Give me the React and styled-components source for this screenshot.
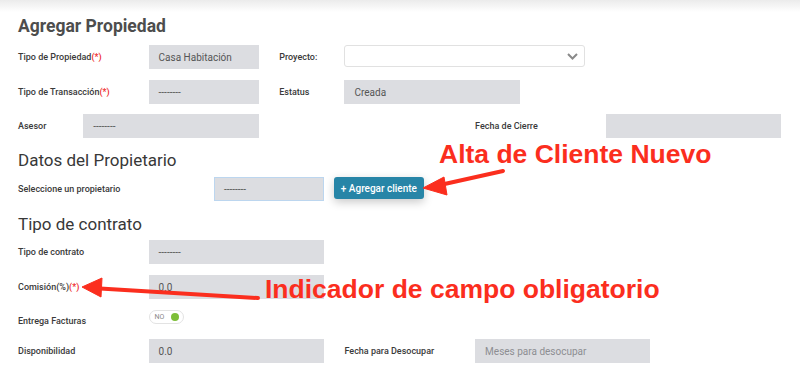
import styled, { createGlobalStyle } from "styled-components";

const GlobalStyle = createGlobalStyle`
  body {
    margin: 0;
    background: #fff;
    font-family: Roboto, "Liberation Sans", sans-serif;
  }
`;

const Page = styled.div`
  position: relative;
  width: 800px;
  height: 375px;
  overflow: hidden;
  background: #fff;
`;

const TopShade = styled.div`
  height: 12px;
  background: linear-gradient(#ebebeb, #fff);
`;

const Content = styled.div`
  padding: 0 19px 0 18px;
  display: flex;
  flex-direction: column;
`;

const PageTitle = styled.h1`
  margin: 3px 0 0;
  font-size: 17.5px;
  line-height: 22px;
  font-weight: 700;
  color: #4d4d4d;
`;

const SectionTitle = styled.h2`
  margin: ${(p) => p.$mt}px 0 0;
  font-size: 17px;
  line-height: 20px;
  font-weight: 400;
  color: #383838;
`;

const Row = styled.div`
  display: grid;
  grid-template-columns: repeat(12, 1fr);
  column-gap: 20.6px;
  align-items: center;
  height: ${(p) => p.$h || 24}px;
  margin-top: ${(p) => p.$mt}px;
`;

const Label = styled.label`
  grid-column: ${(p) => p.$col} / span ${(p) => p.$span || 2};
  font-size: 9px;
  font-weight: 500;
  color: #3a3a3a;
  white-space: nowrap;
`;

const Required = styled.span`
  color: #ee2a2a;
`;

const Field = styled.div`
  grid-column: ${(p) => p.$col} / span ${(p) => p.$span || 2};
  height: 24px;
  box-sizing: border-box;
  padding: 0 9px;
  display: flex;
  align-items: center;
  background: #dcdde1;
  border: 1px solid ${(p) => (p.$focus ? "#bcd6ef" : "#dcdde1")};
  font-size: 10px;
  color: ${(p) => (p.$placeholder ? "#8d8e92" : "#555")};
`;

const Select = styled.div`
  grid-column: ${(p) => p.$col} / span ${(p) => p.$span};
  height: 22px;
  align-self: start;
  box-sizing: border-box;
  border: 1px solid #e1e1e1;
  border-radius: 3px;
  background: #fff;
  display: flex;
  align-items: center;
  justify-content: flex-end;
  padding-right: 6px;
`;

const OwnerGroup = styled.div`
  grid-column: 4 / span 5;
  display: flex;
  align-items: center;
  gap: 10px;
`;

const OwnerField = styled(Field)`
  width: 110px;
  flex: 0 0 110px;
`;

const AddButton = styled.button`
  height: 22px;
  width: 90px;
  margin-top: -2px;
  border: none;
  border-radius: 3px;
  background: #2785a7;
  color: #fff;
  font-family: Roboto, "Liberation Sans", sans-serif;
  font-size: 10px;
  font-weight: 500;
  padding: 0;
  box-shadow: 0 3px 10px rgba(0, 0, 0, 0.22);
`;

const Toggle = styled.div`
  grid-column: 3 / span 1;
  align-self: start;
  width: 35px;
  height: 14px;
  box-sizing: border-box;
  border: 1px solid #e3e3e3;
  border-radius: 8px;
  display: flex;
  align-items: center;
  justify-content: space-between;
  padding: 0 4px 0 5px;
  font-size: 7px;
  color: #888;
`;

const Dot = styled.span`
  width: 8px;
  height: 8px;
  border-radius: 50%;
  background: #7dbe38;
`;

const Note = styled.div`
  position: absolute;
  left: ${(p) => p.$x}px;
  top: ${(p) => p.$y}px;
  font-family: "Liberation Sans", Arial, sans-serif;
  font-weight: 700;
  font-size: 26.5px;
  line-height: 26.5px;
  color: #fb2e1e;
  white-space: nowrap;
`;

const Overlay = styled.svg`
  position: absolute;
  left: 0;
  top: 0;
  pointer-events: none;
`;

const Chevron = () => (
  <svg width="11" height="7" viewBox="0 0 11 7">
    <polyline points="1,1 5.5,5.5 10,1" fill="none" stroke="#8a8a8a" strokeWidth="2" />
  </svg>
);

export default function App() {
  return (
    <Page>
      <GlobalStyle />
      <TopShade />
      <Content>
        <PageTitle>Agregar Propiedad</PageTitle>

        <Row $mt={8}>
          <Label $col={1}>
            Tipo de Propiedad<Required>(*)</Required>
          </Label>
          <Field $col={3}>Casa Habitación</Field>
          <Label $col={5} $span={1}>Proyecto:</Label>
          <Select $col={6} $span={4}>
            <Chevron />
          </Select>
        </Row>

        <Row $mt={11}>
          <Label $col={1}>
            Tipo de Transacción<Required>(*)</Required>
          </Label>
          <Field $col={3}>--------</Field>
          <Label $col={5} $span={1}>Estatus</Label>
          <Field $col={6} $span={3}>Creada</Field>
        </Row>

        <Row $mt={10}>
          <Label $col={1} $span={1}>Asesor</Label>
          <Field $col={2} $span={3}>--------</Field>
          <Label $col={8}>Fecha de Cierre</Label>
          <Field $col={10} $span={3} />
        </Row>

        <SectionTitle $mt={12}>Datos del Propietario</SectionTitle>

        <Row $mt={7}>
          <Label $col={1} $span={3}>Seleccione un propietario</Label>
          <OwnerGroup>
            <OwnerField $focus>--------</OwnerField>
            <AddButton>+ Agregar cliente</AddButton>
          </OwnerGroup>
        </Row>

        <SectionTitle $mt={13}>Tipo de contrato</SectionTitle>

        <Row $mt={6}>
          <Label $col={1}>Tipo de contrato</Label>
          <Field $col={3} $span={3}>--------</Field>
        </Row>

        <Row $mt={11}>
          <Label $col={1}>
            Comisión(%)<Required>(*)</Required>
          </Label>
          <Field $col={3} $span={3}>0.0</Field>
        </Row>

        <Row $mt={11} $h={22}>
          <Label $col={1}>Entrega Facturas</Label>
          <Toggle>
            NO
            <Dot />
          </Toggle>
        </Row>

        <Row $mt={7}>
          <Label $col={1}>Disponibilidad</Label>
          <Field $col={3} $span={3}>0.0</Field>
          <Label $col={6}>Fecha para Desocupar</Label>
          <Field $col={8} $span={3} $placeholder>
            Meses para desocupar
          </Field>
        </Row>
      </Content>

      <Note $x={439} $y={141}>Alta de Cliente Nuevo</Note>
      <Note $x={265} $y={276}>Indicador de campo obligatorio</Note>

      <Overlay width="800" height="375" viewBox="0 0 800 375">
        <g fill="#fb2e1e" stroke="#fb2e1e">
          <line x1="503" y1="171" x2="440" y2="185" strokeWidth="4" strokeLinecap="round" />
          <polygon points="423,188 444,177 447,195" strokeWidth="1" strokeLinejoin="round" />
          <line x1="258" y1="298" x2="100" y2="288.5" strokeWidth="4" strokeLinecap="round" />
          <polygon points="82,287 102,278 101,297" strokeWidth="1" strokeLinejoin="round" />
        </g>
      </Overlay>
    </Page>
  );
}
